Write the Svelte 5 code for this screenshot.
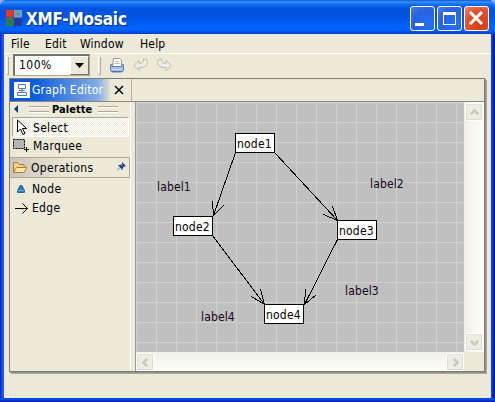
<script>
  const menus = [['File', 20], ['Edit', 21], ['Window', 46], ['Help', 25]];
  const nodes = [
    { name: 'node1', x: 99, y: 31 },
    { name: 'node2', x: 37, y: 114 },
    { name: 'node3', x: 201, y: 118 },
    { name: 'node4', x: 128, y: 202 }
  ];
  const labels = [
    { name: 'label1', x: 21, y: 77 },
    { name: 'label2', x: 234, y: 74 },
    { name: 'label3', x: 209, y: 181 },
    { name: 'label4', x: 65, y: 207 }
  ];
  const edges = [
    'M99.5 50.5L77.5 113.5M76.5 99.5L77.5 113.5L87.5 103.5',
    'M138.5 50.5L201.5 118.5M196.5 104.5L201.5 118.5L187.5 112.5',
    'M76.5 133.5L128.5 202.5M124.5 187.5L128.5 202.5L115.5 194.5',
    'M201.5 137.5L168.5 202.5M169.5 187.5L168.5 202.5L180.5 192.5'
  ];
</script>

{#snippet arrow(turn)}
  <div class="sbtn">
    <svg width="17" height="17" viewBox="0 0 17 17"><path d="M4.8 10.2L8.5 6.5L12.2 10.2" transform="rotate({turn} 8.5 8.5)" fill="none" stroke="#c9c7ba" stroke-width="2.4" /></svg>
  </div>
{/snippet}

<div class="window">
  <header>
    <svg class="logo" width="16" height="16" viewBox="0 0 16 16">
      <path fill="#e33b20" d="M0 0h7.5v7.5H0z" /><path fill="#6da5bb" d="M8 0h8v7.5H8z" />
      <path fill="#358047" d="M0 8h7.5v8H0z" /><path fill="#293b9b" d="M8 8h8v8H8z" />
      <path d="M1 10l5 4M2 14l4-5M9 3l5 2M10 6l4-5M9 13l5-4M10 9l4 5" stroke="#173d5c" stroke-width=".7" opacity=".4" />
    </svg>
    <h1>XMF-Mosaic</h1>
    <div class="controls">
      <div class="ctl"><svg width="25" height="25"><path fill="#fff" d="M5 17h9v3H5z" /></svg></div>
      <div class="ctl"><svg width="25" height="25"><path fill="#fff" fill-rule="evenodd" d="M6 6h13v13H6zM7 9v9h11V9z" /></svg></div>
      <div class="ctl close"><svg width="25" height="25"><path d="M6 6L18 18M18 6L6 18" stroke="#fff" stroke-width="3" /></svg></div>
    </div>
  </header>
  <div class="frame">
    <nav>{#each menus as [m, w]}<span style="width:{w}px">{m}</span>{/each}</nav>
    <div class="toolbar">
      <i class="grip"></i>
      <div class="combo"><span>100%</span><div class="drop"><svg width="9" height="5"><path d="M0 0h9L4.5 5z" /></svg></div></div>
      <i class="grip second"></i>
      <svg class="printer" width="16" height="15" viewBox="0 0 16 15">
        <path d="M1.5 6.5h13v6l-1.5 1.5H3L1.500 12.500z" fill="#a9bfdf" stroke="#6781b4" />
        <path d="M3.500 8.500L4.500 .5h6l2 2v6z" fill="#fff" stroke="#7f94bd" />
        <path d="M6 3.500h4M5.500 5.500h5" stroke="#d1b778" /><path d="M2.500 8.500h11" stroke="#6781b4" /><path d="M3 11.500h10" stroke="#c9d8ee" />
        <path d="M2 13.500h12" stroke="#536fa8" />
      </svg>
      <svg class="undo" width="16" height="14" viewBox="0 0 16 14"><path d="M.7 7.500L6 2.500V5.500Q11 5.500 10.500 .8L13.500 1.500Q17 8 9 9.500H6V12.500z" fill="#efede2" stroke="#bdbbaf" /></svg>
      <svg class="redo" width="16" height="14" viewBox="0 0 16 14"><path transform="translate(16 0) scale(-1 1)" d="M.7 7.500L6 2.500V5.500Q11 5.500 10.500 .8L13.500 1.500Q17 8 9 9.500H6V12.500z" fill="#efede2" stroke="#bdbbaf" /></svg>
    </div>
    <main>
      <div class="tabs">
        <div class="tab">
          <svg width="16" height="16" viewBox="0 0 16 16"><path fill="#fff" d="M0 0h16v16H0z" /><path d="M4.500 2.500h7v4h-7zM3.500 10.500h9v3h-9zM8 6.500v4M5 8.500h6" fill="none" stroke="#5275b5" /></svg>
          <span class="tabname">Graph Editor</span>
          <svg class="x" width="10" height="10"><path d="M1 1L9 9M9 1L1 9" stroke="#000" stroke-width="1.500" /></svg>
        </div>
      </div>
      <div class="body">
        <aside>
          <div class="palhead">
            <svg width="4" height="8"><path d="M4 0v8L0 4z" fill="#0a3a78" /></svg>
            <i class="bars"></i><b>Palette</b><i class="bars right"></i>
          </div>
          <div class="row select">
            <svg width="12" height="17" viewBox="0 0 12 17"><path d="M1.500 1v12l3-3l2.500 5.500l2-1l-2.500-5h4z" fill="#fff" stroke="#000" /></svg>
            <span>Select</span>
          </div>
          <div class="row marquee">
            <svg width="17" height="15" viewBox="0 0 17 15"><path d="M.5 1.500h11v9H.5z" fill="#b5b5b5" stroke="#000" stroke-dasharray="2 1" /><path d="M13.500 9v5M11 11.500h5" stroke="#000" /></svg>
            <span>Marquee</span>
          </div>
          <div class="row ops">
            <svg width="16" height="13" viewBox="0 0 16 13"><path d="M1.500 11.500v-10h4l1.500 2h5v3" fill="#f5d58d" stroke="#b57a2c" /><path d="M1.500 11.500l3-5h10.500l-3 5z" fill="#ffe8ac" stroke="#b57a2c" /></svg>
            <span>Operations</span>
            <svg class="pin" width="9" height="9" viewBox="0 0 9 9"><path d="M0 8.500L3 5.500" stroke="#777" /><path d="M1 3l2 0l2-1l0-2l4 4l-2 .5l-1.500 2v2z" fill="#253e8c" /><path d="M4 3.500l1.500-1" stroke="#8aa6dc" /></svg>
          </div>
          <div class="row node">
            <svg width="8" height="8" viewBox="0 0 8 8"><path d="M3 .5h2l2.500 5v2H.5v-2z" fill="#347aaf" stroke="#286ba2" /><path d="M1 5.500h6" stroke="#74a9cc" /></svg>
            <span>Node</span>
          </div>
          <div class="row edge">
            <svg width="14" height="11"><path d="M0 5.500h12.500M7.500 .5l5 5l-5 5" stroke="#000" fill="none" /></svg>
            <span>Edge</span>
          </div>
        </aside>
        <div class="sash"></div>
        <div class="viewer">
          <div class="canvas">
            <svg width="328" height="250"><g fill="none" stroke="#000" shape-rendering="crispEdges">{#each edges as d}<path {d} />{/each}</g></svg>
            {#each nodes as n}<div class="box" style="left:{n.x}px;top:{n.y}px">{n.name}</div>{/each}
            {#each labels as l}<div class="label" style="left:{l.x}px;top:{l.y}px">{l.name}</div>{/each}
          </div>
          <div class="vscroll">{@render arrow(0)}{@render arrow(180)}</div>
          <div class="hscroll">{@render arrow(270)}{@render arrow(90)}</div>
          <div class="corner"></div>
        </div>
      </div>
    </main>
  </div>
</div>

<style>
  :global(body) { margin: 0; background: #8fb0e8; }
  * { box-sizing: border-box; }
  svg { display: block; flex: none; }
  .window { width: 495px; height: 402px; display: flex; flex-direction: column; overflow: hidden; border-radius: 7px 7px 0 0; font: 12px/16px "DejaVu Sans Condensed", "DejaVu Sans", sans-serif; letter-spacing: .2px; color: #000; background: #0831d9; white-space: nowrap; }
  header { height: 34px; flex: none; display: flex; align-items: flex-start; padding: 0 6px; background: linear-gradient(#0757d8 0, #3c94ff 2px, #1372f8 4px, #0454dc 8px, #0053e0 17px, #0062fb 26px, #0063ff 30px, #0048cc 33px, #003dd7 34px); }
  .logo { margin-top: 10px; }
  h1 { font: bold 17px/20px "DejaVu Sans Condensed", sans-serif; letter-spacing: -.2px; color: #fff; margin: 9px 0 0 4px; text-shadow: 1px 1px 1px #092f82; }
  .controls { display: flex; gap: 2px; margin: 6px 0 0 auto; }
  .ctl { width: 25px; height: 25px; border: 1px solid #fff; border-radius: 3px; background: radial-gradient(circle at 75% 75%, #2371f5, #2861e0 60%, #4d80ec); }
  .ctl svg { margin: -1px; }
  .close { background: radial-gradient(circle at 70% 75%, #d83a11, #df5330 60%, #ec8870); }
  .frame { position: relative; height: 368px; padding: 0 4px 4px; background: linear-gradient(#0000, #0000 364px, #0454ea 364px, #0340dc 366px, #001aa0 368px), linear-gradient(90deg, #0019cf, #0831d9 1px, #166aee 3px, #0855dd 4px, #0855dd 491px, #0340dc 492px, #001ea0 494px); }
  .frame::before { content: ""; position: absolute; inset: 34px 4px 4px; background: #ece9d8; }
  nav, .toolbar, main { background-color: #ece9d8; position: relative; }
  nav { height: 20px; display: flex; gap: 14px; padding: 2px 0 0 7px; border-bottom: 1px solid #fff; }
  .toolbar { height: 24px; display: flex; align-items: flex-start; }
  .grip { width: 3px; height: 18px; margin: 3px 0 0 2px; border-right: 1px solid #aca899; border-bottom: 1px solid #aca899; border-left: 1px solid #fff; flex: none; }
  .combo { width: 77px; height: 22px; margin-left: 4px; background: #fff; border: 1px solid #aca899; border-top: 2px solid #77756a; border-left: 2px solid #77756a; display: flex; }
  .combo > span { padding: 1px 0 0 4px; width: 55px; letter-spacing: .5px; }
  .drop { width: 19px; height: 19px; background: #ece9d8; border: 1px solid #fff; border-right-color: #77756a; border-bottom-color: #77756a; display: flex; align-items: center; justify-content: center; }
  .grip.second { margin-left: 8px; }
  .printer { margin: 4px 0 0 8px; }
  .undo, .redo { margin: 4px 0 0 8px; }
  .redo { margin-left: 7px; }
  main { width: 476px; height: 294px; margin-left: 5px; border: 1px solid #7f7d77; box-shadow: 1px 1px #918f87, 2px 2px #aaa79c; }
  .tabs { height: 23px; border-bottom: 1px solid #8a8880; }
  .tab { width: 122px; height: 22px; border-right: 1px solid #b3b0a3; display: flex; align-items: center; padding: 0 0 0 4px; background: linear-gradient(90deg, #0054e3 0, #0b5ce2 25px, #84ade2 88px, #d5dcd9 99px, #ece9d8 100px); }
  .tabname { color: #fff; margin-left: 2px; width: 75px; letter-spacing: .22px; }
  .x { margin-left: 7px; }
  .body { height: 269px; display: flex; }
  aside { width: 120px; flex: none; }
  .palhead { height: 14px; display: flex; align-items: center; padding-left: 4px; }
  .bars { width: 20px; height: 6px; margin: 0 4px 0 11px; border: solid #aca899; border-width: 1px 0; box-shadow: 0 1px #fff, inset 0 1px #fff; }
  .bars.right { margin: 0 0 0 5px; }
  b { font-size: 11px; letter-spacing: .05px; width: 40px; padding-top: 1px; margin-left: -1px; margin-right: 1px; }
  .row { height: 18px; display: flex; align-items: center; letter-spacing: .3px; }
  .select { height: 20px; margin: 1px 1px 0 2px; border: 1px solid #aca899; border-right-color: #fff; border-bottom-color: #fff; background: repeating-conic-gradient(#fff 0 25%, #ece9d8 0 50%) 0 0 / 2px 2px; padding-left: 3px; }
  .select span { margin: 1px 0 0 5px; }
  .marquee { padding-left: 3px; height: 17px; }
  .marquee span { margin-left: 3px; }
  .ops { height: 21px; margin-top: 3px; border: solid #aca899; border-width: 1px 1px 1px 0; padding: 0 3px 0 2px; background: linear-gradient(90deg, #c9c6b9, #ece9d8 60px); }
  .ops span { margin-left: 3px; }
  .pin { margin: -3px 0 0 auto; }
  .node { padding-left: 7px; margin-top: 2px; }
  .node span { margin-left: 7px; }
  .edge { padding-left: 5px; margin-top: 1px; }
  .edge span { margin-left: 3px; }
  .sash { width: 6px; border-left: 1px solid #fff; border-right: 1px solid #9c9a91; flex: none; }
  .viewer { display: grid; grid-template: 250px 19px / 328px 20px; }
  .canvas { position: relative; background: linear-gradient(90deg, #d0d0d0 1px, #0000 1px) 0 0 / 20px 20px, linear-gradient(#d0d0d0 1px, #0000 1px) 0 0 / 20px 20px, #c0c0c0; }
  .box { position: absolute; width: 40px; height: 20px; border: 1px solid #000; background: #fff; padding: 2px 0 0 1px; }
  .label { position: absolute; color: #160416; letter-spacing: .15px; }
  .vscroll, .hscroll { display: flex; justify-content: space-between; background: linear-gradient(90deg, #f1efe6, #fefefb); }
  .vscroll { flex-direction: column; padding: 1px; }
  .hscroll { background: linear-gradient(#f1efe6, #fefefb); padding: 1px 0; }
  .sbtn { width: 18px; height: 18px; border: 1px solid #fff; border-radius: 2px; background: #efede3; box-shadow: inset -1px -1px #dddacb, inset 1px 1px #e4e1d4; flex: none; }
  .corner { background: #ece9d8; }
</style>
